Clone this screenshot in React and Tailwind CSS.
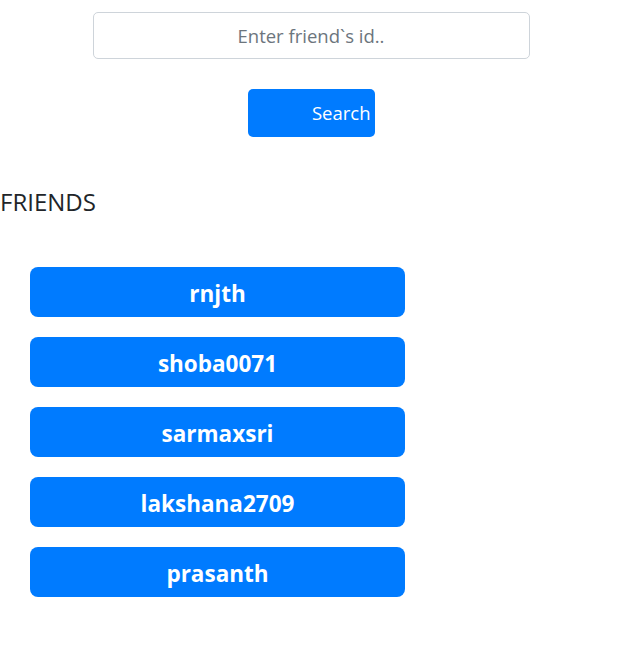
export default function App() {
  const friends = ['rnjth', 'shoba0071', 'sarmaxsri', 'lakshana2709', 'prasanth'];

  return (
    <div className="w-[622px] h-[666px] bg-white text-[#212529]" style={{ fontFamily: '"Open Sans", "Noto Sans", sans-serif' }}>
      {/* search */}
      <div className="flex flex-col items-center pt-3">
        <input
          placeholder="Enter friend`s id.."
          className="w-[437px] h-[47px] border border-[#ced4da] rounded-[5px] text-center text-[18.5px] outline-none placeholder:text-[#6c757d]"
        />
        <button className="mt-[30px] w-[127px] h-[48px] bg-[#007bff] text-white rounded-[5px] text-[18.5px] text-right pr-[4px]">
          Search
        </button>
      </div>

      <h3 className="mt-[51px] text-[24px] leading-[28px]">FRIENDS</h3>

      {/* list */}
      <div className="mt-[51px] pl-[30px] flex flex-col gap-[20px]">
        {friends.map(f => (
          <button key={f} className="w-[375px] h-[50px] bg-[#007bff] text-white rounded-[8px] text-[22.5px] font-bold pt-[4px]">
            {f}
          </button>
        ))}
      </div>
    </div>
  );
}
